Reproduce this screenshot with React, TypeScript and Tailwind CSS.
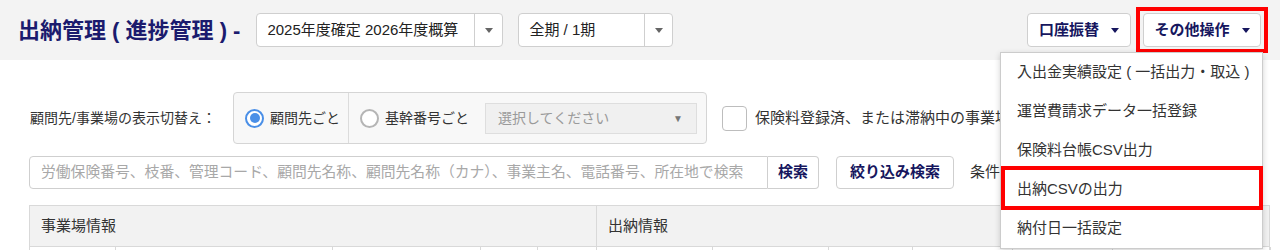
import React from "react";

const FONT = { fontFamily: '"Liberation Sans", "Noto Sans CJK JP", sans-serif' };

function Caret({ color = "border-t-[#666]" }: { color?: string }) {
  return (
    <span
      className={`inline-block w-0 h-0 border-l-[4px] border-r-[4px] border-t-[5px] border-l-transparent border-r-transparent ${color}`}
    />
  );
}

function Select({ width, text }: { width: string; text: string }) {
  return (
    <div className={`flex h-[34px] ${width} rounded-[4px] border border-[#cfcfcf] bg-white`}>
      <div className="flex flex-1 items-center pl-[10px] text-[15px] text-[#222]">{text}</div>
      <div className="flex w-[28px] items-center justify-center border-l border-[#cfcfcf]">
        <Caret />
      </div>
    </div>
  );
}

function Radio({ checked, label }: { checked: boolean; label: string }) {
  return (
    <div className="flex items-center gap-[6px]">
      {checked ? (
        <span className="flex h-[19px] w-[19px] items-center justify-center rounded-full border-2 border-[#4a8fe7] bg-white">
          <span className="h-[10px] w-[10px] rounded-full bg-[#4a8fe7]" />
        </span>
      ) : (
        <span className="h-[19px] w-[19px] rounded-full border-2 border-[#b5b5b5] bg-white" />
      )}
      <span className="text-[14px] text-[#333]">{label}</span>
    </div>
  );
}

export default function App() {
  const items = [
    "入出金実績設定 ( 一括出力・取込 )",
    "運営費請求データ一括登録",
    "保険料台帳CSV出力",
    "出納CSVの出力",
    "納付日一括設定",
  ];
  const subCols = [86, 217, 148, 57, 59, 116, 116, 84, 100, 100, 158];
  return (
    <div className="relative h-[250px] w-[1280px] overflow-hidden bg-white" style={FONT}>
      {/* Header */}
      <div className="flex h-[60px] items-center bg-[#f3f3f3] pl-[18px] pr-[12px]">
        <h1 className="text-[22px] font-bold text-[#1b1b6e]">出納管理 ( 進捗管理 ) -</h1>
        <div className="ml-[16px]">
          <Select width="w-[247px]" text="2025年度確定 2026年度概算" />
        </div>
        <div className="ml-[15px]">
          <Select width="w-[155px]" text="全期 / 1期" />
        </div>
        <div className="ml-auto flex items-center">
          <button className="flex h-[34px] w-[104px] items-center justify-center gap-[12px] rounded-[4px] border border-[#cfcfcf] bg-white text-[15px] font-bold text-[#16165e]">
            口座振替
            <Caret color="border-t-[#16165e]" />
          </button>
          <div className="ml-[5px] border-4 border-[#ff0000] px-[3px] py-[2px]">
            <button className="flex h-[34px] w-[118px] items-center justify-center gap-[12px] rounded-[4px] border border-[#cfcfcf] bg-white text-[15px] font-bold text-[#16165e]">
              その他操作
              <Caret color="border-t-[#16165e]" />
            </button>
          </div>
        </div>
      </div>

      {/* Row 2 */}
      <div className="mt-[32px] flex items-center pl-[30px]">
        <div className="w-[203px] text-[14px] text-[#333]">顧問先/事業場の表示切替え：</div>
        <div className="flex h-[52px] w-[474px] items-center rounded-[4px] border border-[#d5d5d5] bg-[#f8f8f8]">
          <div className="flex h-full w-[115px] items-center border-r border-[#dcdcdc] pl-[11px]">
            <Radio checked label="顧問先ごと" />
          </div>
          <div className="pl-[11px]">
            <Radio checked={false} label="基幹番号ごと" />
          </div>
          <div className="ml-[16px] flex h-[31px] w-[212px] items-center justify-between border border-[#dedede] bg-[#f0f0f0] pl-[12px] pr-[13px] text-[14px] text-[#9a9a9a]">
            <span>選択してください</span>
            <span className="text-[10px] text-[#777]">▼</span>
          </div>
        </div>
        <div className="ml-[15px] h-[25px] w-[25px] rounded-[4px] border border-[#bdbdbd] bg-white" />
        <div className="ml-[8px] w-[245px] overflow-hidden whitespace-nowrap text-[15px] text-[#333]">
          保険料登録済、または滞納中の事業場のみ表示
        </div>
      </div>

      {/* Row 3 */}
      <div className="mt-[12px] flex items-center pl-[29px]">
        <div className="flex h-[33px] w-[739px] items-center rounded-l-[4px] border border-[#cfcfcf] bg-white pl-[11px] text-[14.8px] text-[#a8a8a8]">
          労働保険番号、枝番、管理コード、顧問先名称、顧問先名称（カナ）、事業主名、電話番号、所在地で検索
        </div>
        <button className="h-[33px] w-[51px] rounded-r-[4px] border border-l-0 border-[#cfcfcf] bg-white text-[15px] font-bold text-[#16165e]">
          検索
        </button>
        <button className="ml-[17px] h-[33px] w-[118px] rounded-[4px] border border-[#cfcfcf] bg-white text-[15px] font-bold text-[#16165e]">
          絞り込み検索
        </button>
        <span className="ml-[16px] w-[30px] overflow-hidden whitespace-nowrap text-[15px] text-[#333]">条件を保存</span>
      </div>

      {/* Table */}
      <div className="ml-[29px] mt-[16px] w-[1241px] border-l border-r border-t border-[#d9d9d9]">
        <div className="flex h-[40px] bg-[#f2f2f2] text-[15px] text-[#333]">
          <div className="flex w-[567px] items-center border-r border-[#d9d9d9] pl-[11px]">事業場情報</div>
          <div className="flex flex-1 items-center pl-[11px]">出納情報</div>
        </div>
        <div className="flex h-[20px] border-t border-[#d9d9d9] bg-white">
          {subCols.map((w, i) => (
            <div
              key={i}
              className="h-full shrink-0 border-r border-[#d9d9d9]"
              style={{ width: w }}
            />
          ))}
        </div>
      </div>

      {/* Dropdown menu */}
      <div className="absolute left-[1000px] top-[52px] w-[263px] border border-[#cccccc] bg-white shadow-[0_2px_6px_rgba(0,0,0,0.18)]">
        {items.map((t) => (
          <div key={t} className="flex h-[39px] items-center whitespace-nowrap pl-[16px] text-[15px] text-[#333]">
            {t}
          </div>
        ))}
        <div className="absolute left-0 top-[113px] h-[44px] w-[262px] border-4 border-[#ff0000]" />
      </div>
    </div>
  );
}
